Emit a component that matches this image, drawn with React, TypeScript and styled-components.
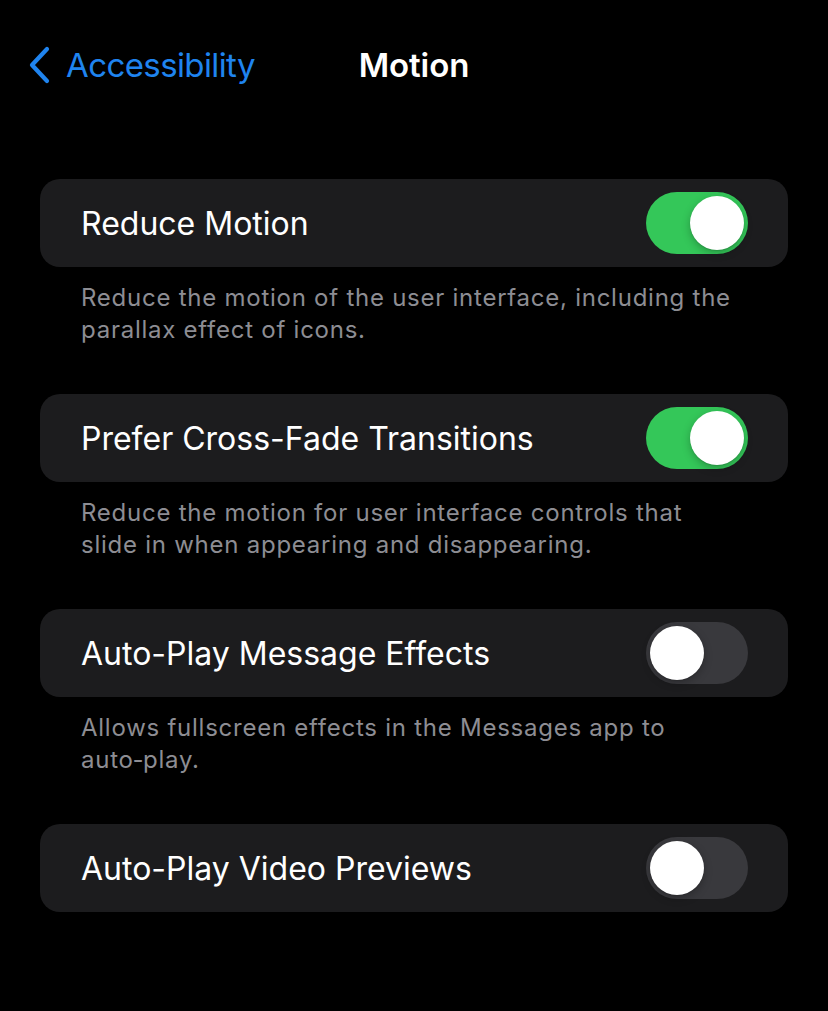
import React, { useState } from 'react'
import styled, { createGlobalStyle } from 'styled-components'

const GlobalStyle = createGlobalStyle`
  html, body {
    margin: 0;
    padding: 0;
    background: #000000;
  }
  body {
    font-family: Inter, 'Noto Sans', 'Liberation Sans', sans-serif;
    -webkit-font-smoothing: antialiased;
  }
`

interface Setting {
  id: string
  label: string
  footer?: string
  on: boolean
}

const initialSettings: Setting[] = [
  {
    id: 'reduce-motion',
    label: 'Reduce Motion',
    footer:
      'Reduce the motion of the user interface, including the parallax effect of icons.',
    on: true,
  },
  {
    id: 'cross-fade',
    label: 'Prefer Cross-Fade Transitions',
    footer:
      'Reduce the motion for user interface controls that slide in when appearing and disappearing.',
    on: true,
  },
  {
    id: 'message-effects',
    label: 'Auto-Play Message Effects',
    // non-breaking hyphen so "auto-play" wraps as one word
    footer: 'Allows fullscreen effects in the Messages app to auto\u2011play.',
    on: false,
  },
  {
    id: 'video-previews',
    label: 'Auto-Play Video Previews',
    on: false,
  },
]

export default function App() {
  const [settings, setSettings] = useState(initialSettings)

  const toggle = (id: string) =>
    setSettings(prev =>
      prev.map(s => (s.id === id ? { ...s, on: !s.on } : s))
    )

  return (
    <Page>
      <GlobalStyle />
      <NavBar>
        <BackButton>
          <svg width="24" height="38" viewBox="0 0 24 38" fill="none">
            <path
              d="M20 3 L5 19 L20 35"
              stroke="#1f84ef"
              strokeWidth="4.2"
              strokeLinecap="round"
              strokeLinejoin="round"
            />
          </svg>
          <BackLabel>Accessibility</BackLabel>
        </BackButton>
        <Title>Motion</Title>
        <span />
      </NavBar>

      <List>
        {settings.map(s => (
          <Group key={s.id}>
            <Cell>
              <CellLabel>{s.label}</CellLabel>
              <Switch
                $on={s.on}
                role="switch"
                aria-checked={s.on}
                onClick={() => toggle(s.id)}
              >
                <Knob $on={s.on} />
              </Switch>
            </Cell>
            {s.footer && <Footer>{s.footer}</Footer>}
          </Group>
        ))}
      </List>
    </Page>
  )
}

const Page = styled.div`
  width: 828px;
  min-height: 1011px;
  background: #000000;
  color: #ffffff;
`

const NavBar = styled.header`
  height: 130px;
  padding: 0 27px;
  display: grid;
  grid-template-columns: 1fr auto 1fr;
  align-items: center;
  box-sizing: border-box;
`

const BackButton = styled.div`
  display: flex;
  align-items: center;
  gap: 15px;
  color: #1f84ef;
  cursor: pointer;
`

const BackLabel = styled.span`
  font-size: 33px;
  font-weight: 400;
  letter-spacing: -0.6px;
`

const Title = styled.h1`
  margin: 0;
  font-size: 33px;
  font-weight: 600;
  letter-spacing: -0.1px;
`

const List = styled.main`
  padding: 49px 40px 0;
  display: flex;
  flex-direction: column;
  gap: 48px;
`

const Group = styled.section`
  display: flex;
  flex-direction: column;
`

const Cell = styled.div`
  height: 88px;
  padding: 0 40px 0 41px;
  display: flex;
  align-items: center;
  justify-content: space-between;
  background: #1c1c1e;
  border-radius: 20px;
`

const CellLabel = styled.span`
  font-size: 32px;
  font-weight: 400;
  letter-spacing: 0;
  color: #ffffff;
`

const Switch = styled.button<{ $on: boolean }>`
  position: relative;
  width: 102px;
  height: 62px;
  padding: 0;
  border: none;
  border-radius: 31px;
  background: ${p => (p.$on ? '#34c759' : '#39393d')};
  cursor: pointer;
  flex-shrink: 0;
`

const Knob = styled.span<{ $on: boolean }>`
  position: absolute;
  top: 4px;
  left: ${p => (p.$on ? '44px' : '4px')};
  width: 54px;
  height: 54px;
  border-radius: 50%;
  background: #ffffff;
  box-shadow: 0 3px 8px rgba(0, 0, 0, 0.25), 0 1px 1px rgba(0, 0, 0, 0.1);
`

const Footer = styled.p`
  margin: 15px 0 0;
  padding: 0 50px 0 41px;
  font-size: 24px;
  line-height: 32px;
  color: #8d8d93;
  letter-spacing: 0.75px;
`
